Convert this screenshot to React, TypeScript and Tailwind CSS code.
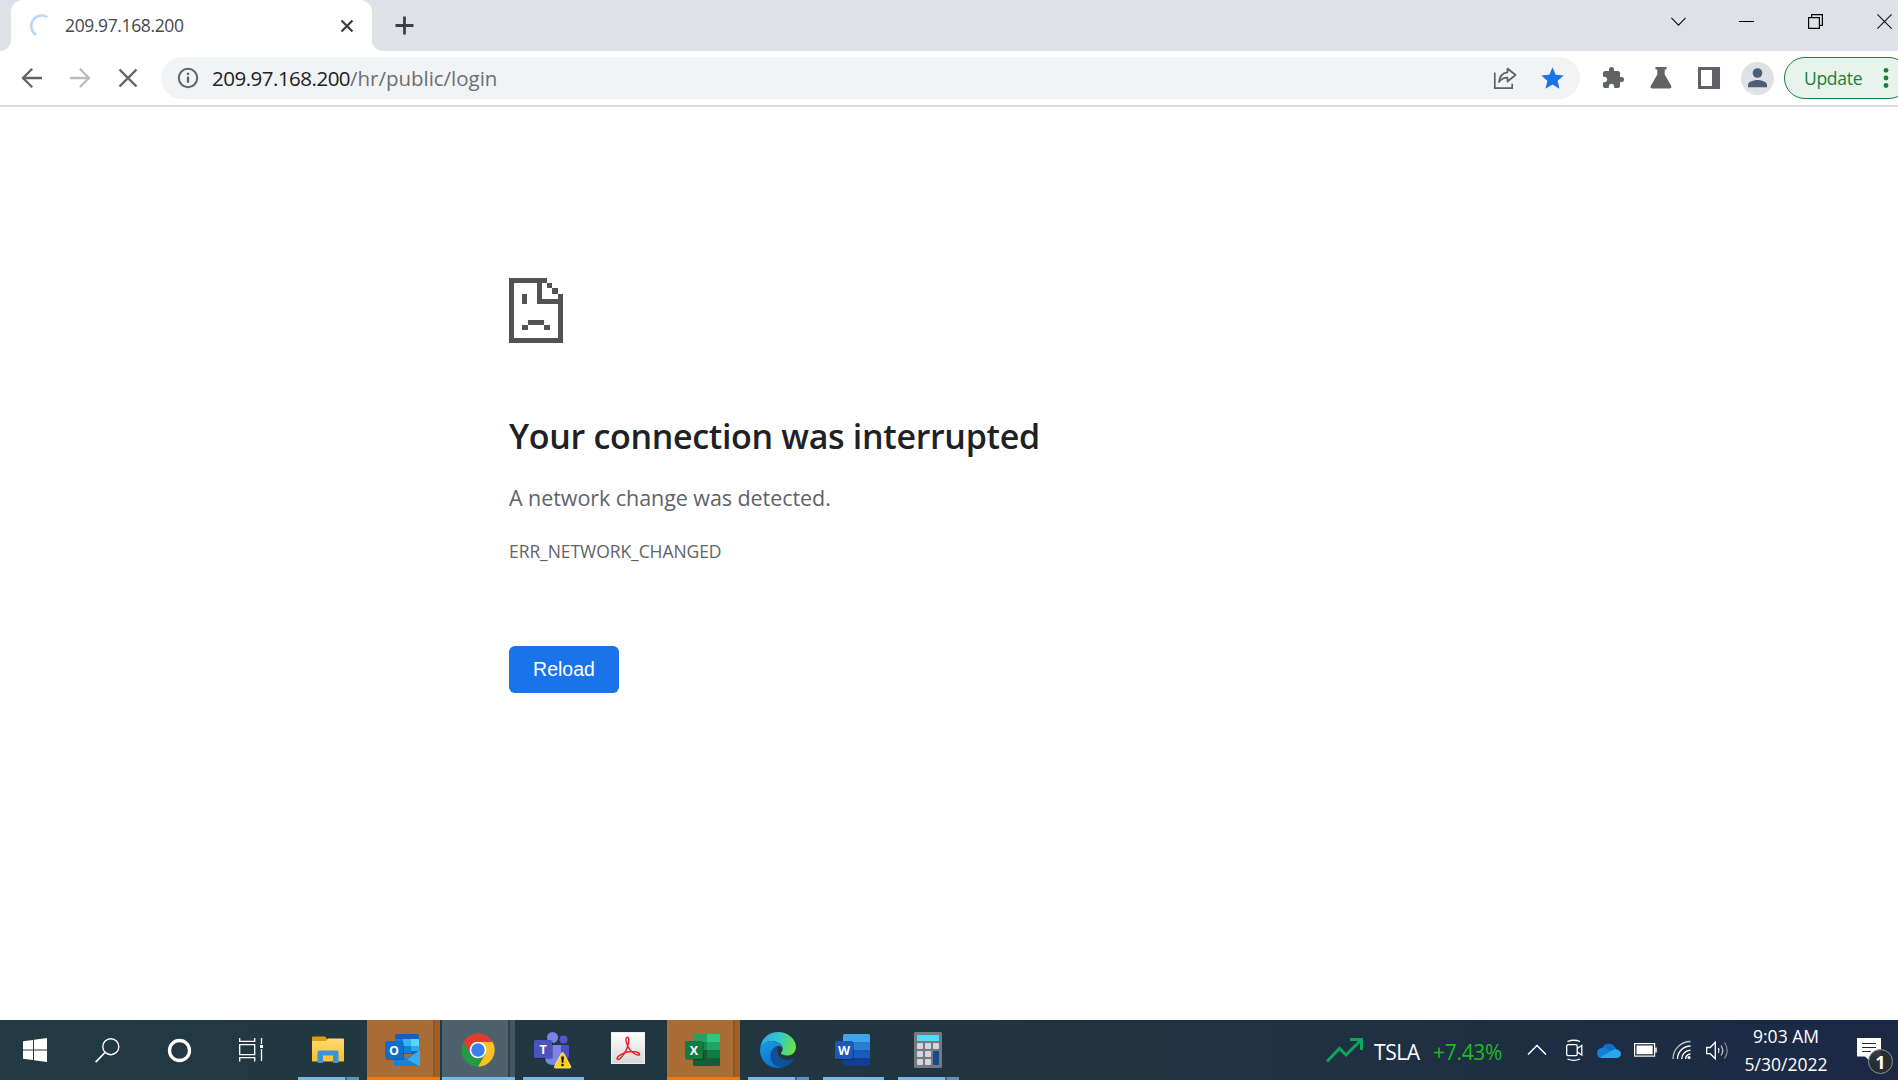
import type { ReactNode } from "react";
import { MdExtension, MdStar } from "react-icons/md";

function TabStrip() {
  return (
    <div className="flex h-[51px] shrink-0 bg-[#dee1e6]">
      <div className="flex w-[11px] items-end bg-white">
        <div className="h-full w-full rounded-br-[11px] bg-[#dee1e6]" />
      </div>
      <div className="flex w-[361px] items-center rounded-t-[12px] bg-white pl-[17px]">
        <svg width="24" height="26" viewBox="0 0 24 26" fill="none">
          <path d="M19.3 4.2A10 10 0 1 0 8 21.8" stroke="#bad6fb" strokeWidth="2.6" />
        </svg>
        <span className="-mt-[2px] ml-[13px] w-[260px] text-[17.5px] leading-[24px] tracking-[-0.38px] text-[#45494d]">
          209.97.168.200
        </span>
        <svg className="ml-[15px]" width="14" height="14" viewBox="0 0 14 14" fill="none">
          <path d="M1.5 1.5l11 11M12.5 1.5l-11 11" stroke="#3c4043" strokeWidth="2.3" />
        </svg>
      </div>
      <div className="flex w-[11px] bg-white">
        <div className="h-full w-full rounded-bl-[11px] bg-[#dee1e6]" />
      </div>
      <svg className="ml-[12px] mt-[16px]" width="19" height="19" viewBox="0 0 19 19" fill="none">
        <path d="M9.5 .5v18M.5 9.5h18" stroke="#3c4043" strokeWidth="2.8" />
      </svg>
      <div className="ml-auto flex pr-[6px] pt-[14px]">
        <svg width="15" height="15" viewBox="0 0 15 15" fill="none" stroke="#111" strokeWidth="1.1">
          <path d="M.4 3.8l7.1 7.4 7.1-7.4" />
        </svg>
        <svg className="ml-[53px]" width="15" height="15" viewBox="0 0 15 15" fill="none" stroke="#000">
          <path d="M0 7.5h15" />
        </svg>
        <svg className="ml-[54px]" width="15" height="15" viewBox="0 0 15 15" fill="none" stroke="#000" strokeWidth="1.2">
          <path d="M.6 3.6h10.8v10.8H.6zM3.6 3.6v-3h10.8v10.8h-3" />
        </svg>
        <svg className="ml-[54px]" width="15" height="15" viewBox="0 0 15 15" fill="none" stroke="#111" strokeWidth="1.1">
          <path d="M.4.4l14.2 14.2M14.6.4L.4 14.6" />
        </svg>
      </div>
    </div>
  );
}

function Toolbar() {
  return (
    <div className="flex h-[56px] w-[1898px] shrink-0 items-start overflow-hidden border-b-2 border-[#dadcde] bg-white pt-[6px]">
      <div className="flex h-[42px] w-[161px] shrink-0 items-center pl-[21px]">
        <svg width="22" height="22" viewBox="0 0 22 22" fill="none" stroke="#5f6368" strokeWidth="2.3">
          <path d="M21 11H2.5M11.2 1.8L2 11l9.2 9.2" />
        </svg>
        <svg className="ml-[26px]" width="22" height="22" viewBox="0 0 22 22" fill="none" stroke="#babcbe" strokeWidth="2.3">
          <path d="M1 11h18.5M10.8 1.8L20 11l-9.2 9.2" />
        </svg>
        <svg className="ml-[27px]" width="20" height="20" viewBox="0 0 20 20" fill="none" stroke="#5f6368" strokeWidth="2.4">
          <path d="M1.5 1.5l17 17M18.5 1.5l-17 17" />
        </svg>
      </div>
      <div className="flex h-[42px] w-[1419px] shrink-0 items-center rounded-full bg-[#f1f3f4] pl-[16px] pr-[14px]">
        <svg width="22" height="22" viewBox="0 0 22 22" fill="none">
          <circle cx="11" cy="11" r="9.2" stroke="#5f6368" strokeWidth="2" />
          <path d="M11 9.6v6.2M11 5.8v2.3" stroke="#5f6368" strokeWidth="2.3" />
        </svg>
        <div className="-mt-[1px] ml-[13px] flex text-[20.5px] leading-[28px]">
          <span className="tracking-[-0.5px] text-[#202124]">209.97.168.200</span>
          <span className="tracking-[-0.03px] text-[#6b6f74]">/hr/public/login</span>
        </div>
        <svg className="ml-auto" width="24" height="24" viewBox="0 0 24 24" fill="none" stroke="#5f6368" strokeWidth="1.7">
          <path d="M1.8 6.5v15.700h17.4v-4.5" />
          <path d="M14.5 2.500L22.5 9l-8 6.500v-3.800c-3.700 0-6.400 1.300-8.500 4.300.6-5.600 3.600-9 8.500-9.600z" strokeLinejoin="round" />
        </svg>
        <MdStar className="ml-[22px] text-[#1a73e8]" size={27} />
      </div>
      <div className="ml-[21px] flex h-[42px] shrink-0 items-center text-[#5f6368]">
        <MdExtension size={24} />
        <svg className="ml-[25px]" width="22" height="22" viewBox="0 0 22 22" fill="currentColor">
          <path d="M5.5 0h11v2.600h-1.800v5L21 18.500c1 1.800.2 3-1.500 3h-17c-1.700 0-2.500-1.200-1.500-3L7.300 7.600v-5H5.500z" />
        </svg>
        <svg className="ml-[26px]" width="22" height="22" viewBox="0 0 22 22">
          <path fill="currentColor" fillRule="evenodd" d="M0 0h22v22H0zM3 3v16h11V3z" />
        </svg>
        <div className="ml-[21px] flex h-[33px] w-[33px] items-center justify-center rounded-full bg-[#dee1e6]">
          <svg width="19" height="20" viewBox="0 0 19 20" fill="#4e5d78">
            <circle cx="9.5" cy="5" r="4.8" />
            <path d="M0 19.200v-2.400c0-3.200 6.300-4.800 9.500-4.800s9.500 1.600 9.500 4.800v2.400z" />
          </svg>
        </div>
        <div className="ml-[10px] flex h-[42px] w-[126px] shrink-0 items-center rounded-full border-[1.5px] border-[#188038] bg-[#e9f3ee] pl-[19px]">
          <span className="-mt-[1px] w-[60px] text-[17.5px] leading-[24px] tracking-[-0.3px] text-[#188038]">Update</span>
          <svg className="ml-[19px]" width="6" height="22" viewBox="0 0 6 22" fill="#188038">
            <circle cx="3" cy="3.300" r="2.400" />
            <circle cx="3" cy="11" r="2.400" />
            <circle cx="3" cy="18.500" r="2.400" />
          </svg>
        </div>
      </div>
    </div>
  );
}

function SadPage() {
  return (
    <svg width="54" height="65" viewBox="0 0 54 65" fill="#535353" shapeRendering="crispEdges">
      <path d="M0 0h38v5h-5v16h21v44H0zM5 5v55h44V26H28V5z" fillRule="evenodd" />
      <path d="M38 5h5v5h-5zM43 10h6v6h-6zM49 16h5v6h-5zM13 16h5v10h-5zM19 42h16v5H19zM13 47h6v5h-6zM35 47h6v5h-6z" />
    </svg>
  );
}

function ErrorPage() {
  return (
    <main className="flex-1 bg-white pl-[509px] pt-[171px]">
      <SadPage />
      <h1 className="mt-[68px] h-[50px] whitespace-nowrap text-[34px] font-semibold leading-[50px] tracking-[-0.32px] text-[#202124]">
        Your connection was interrupted
      </h1>
      <p className="mt-[21px] h-[32px] text-[21.5px] leading-[32px] tracking-[-0.06px] text-[#5f6368]">
        A network change was detected.
      </p>
      <p className="mt-[24px] h-[26px] text-[17.5px] leading-[26px] tracking-[-0.07px] text-[#5f6368]">
        ERR_NETWORK_CHANGED
      </p>
      <button className="mt-[82px] flex h-[47px] w-[110px] items-center justify-center rounded-[6px] bg-[#1a73e8] font-['Liberation_Sans',sans-serif] text-[19.5px] text-white">
        Reload
      </button>
    </main>
  );
}

function Indicator({ grouped }: { grouped?: boolean }) {
  return (
    <div className="absolute bottom-0 left-[7px] flex h-[3px] w-[61px]">
      <div className="flex-1 bg-[#76b9ed]" />
      {grouped && <div className="w-[2px] bg-[#41688a]" />}
      {grouped && <div className="w-[12px] bg-[#5f93bd]" />}
    </div>
  );
}

function Slot({ children, kind }: { children: ReactNode; kind?: "single" | "group" | "alert" | "active" }) {
  return (
    <div className="relative flex h-[60px] w-[75px] items-center justify-center pr-[2px]">
      {kind === "alert" && (
        <div className="absolute inset-x-[1px] inset-y-0 flex border-b-[3px] border-[#ff7300] bg-[#a96c34]">
          <div className="ml-auto w-[7px] border-l-2 border-[#915623] bg-[#9f5f27]" />
        </div>
      )}
      {kind === "active" && (
        <div className="absolute inset-x-[1px] inset-y-0 flex border-b-[3px] border-[#76b9ed] bg-[#4d626a]">
          <div className="ml-auto w-[7px] border-l-2 border-[#303f48] bg-[#445760]" />
        </div>
      )}
      {kind === "single" && <Indicator />}
      {kind === "group" && <Indicator grouped />}
      <div className="relative">{children}</div>
    </div>
  );
}

function OfficeBadge({ fill, letter }: { fill: string; letter: string }) {
  return (
    <>
      <rect x="1" y="9" width="18" height="18" rx="1.5" fill="#000" opacity=".25" />
      <rect x="0" y="8" width="18" height="18" rx="1.5" fill={fill} />
      <text x="9" y="21.5" textAnchor="middle" fontSize="12.5" fontWeight="700" fill="#fff" fontFamily="Open Sans, sans-serif">
        {letter}
      </text>
    </>
  );
}

function Taskbar() {
  return (
    <div className="flex h-[60px] w-[1898px] shrink-0 items-center bg-linear-to-r from-[#223a43] via-[#21353f] via-55% to-[#1b2945] text-white">
      <div className="flex w-[291px] shrink-0">
        <div className="flex w-[70px] justify-center">
          <svg width="24" height="24" viewBox="0 0 24 24" fill="#fff">
            <path d="M0 3.300l10-1.400v9.600H0zM11 1.700L24 0v11.500H11zM0 12.500h10v9.600L0 20.700zM11 12.500h13V24l-13-1.700z" />
          </svg>
        </div>
        <div className="flex w-[74px] justify-center">
          <svg width="25" height="25" viewBox="0 0 25 25" fill="none" stroke="#fff" strokeWidth="1.4">
            <circle cx="15.8" cy="8.7" r="8" />
            <path d="M10 14.500L.6 24.200" strokeWidth="1.7" />
          </svg>
        </div>
        <div className="flex w-[70px] justify-center">
          <svg width="25" height="25" viewBox="0 0 25 25" fill="none">
            <circle cx="12.5" cy="12.5" r="10" stroke="#fff" strokeWidth="3.3" />
          </svg>
        </div>
        <div className="flex w-[74px] justify-center">
          <svg width="25" height="24" viewBox="0 0 25 24" fill="none" stroke="#fff" strokeWidth="1.3">
            <path d="M.7 0v3.400h15V0M.7 6.700h15v10H.7zM.7 23.500v-3.800h15v3.800M22.500 0v6M22.500 11v12" />
            <rect x="21" y="7" width="3" height="3" fill="#fff" stroke="none" />
          </svg>
        </div>
      </div>
      <div className="flex shrink-0">
        <Slot kind="group">
          <svg width="32" height="28" viewBox="0 0 32 28">
            <defs>
              <linearGradient id="fold" x1="0" y1="0" x2="0" y2="1">
                <stop offset="0" stopColor="#ffdb73" />
                <stop offset="1" stopColor="#fbc02f" />
              </linearGradient>
            </defs>
            <path d="M0 1.500Q0 .5 1 .5h12l2.500 3H32V7H0z" fill="#e09e0c" />
            <path d="M0 5h14l2-2.500h15q1 0 1 1V25.500H0z" fill="url(#fold)" />
            <path d="M5.500 16.500q0-2 2-2h17q2 0 2 2V27H21v-7.500H11V27H5.500z" fill="#3a94dc" />
          </svg>
        </Slot>
        <Slot kind="alert">
          <svg width="36" height="34" viewBox="0 0 36 34">
            <rect x="10" y="1" width="24" height="20" rx="1.5" fill="#0f63bd" />
            <path d="M10 6h8v7h-8z" fill="#1481d6" />
            <path d="M18 6h8v7h-8z" fill="#35b4f2" />
            <path d="M26 6h8v7h-8z" fill="#57d8fc" />
            <path d="M10 13h8v7h-8z" fill="#0e5cab" />
            <path d="M18 13h8v7h-8z" fill="#1380d6" />
            <path d="M26 13h8v5h-8z" fill="#2ea8ea" />
            <path d="M9 19l13 6 13-8v15q0 1-1 1H10q-1 0-1-1z" fill="#1c8ee2" />
            <path d="M35 17v15q0 1-1 1H14z" fill="#35aef0" />
            <path d="M9 19v13q0 1 1 1h24z" fill="#1682dc" />
            <OfficeBadge fill="#0f6fce" letter="O" />
          </svg>
        </Slot>
        <Slot kind="active">
          <svg width="34" height="34" viewBox="0 0 48 48">
            <path d="M24 24L3.650 12.250A23.500 23.500 0 0 0 24 47.500L33.500 29z" fill="#249a48" />
            <path d="M24 12.250h20.350A23.500 23.500 0 0 1 24 47.500l10-17.500z" fill="#fcc31e" />
            <path d="M24 12.250h20.350A23.500 23.500 0 0 0 3.650 12.250l10.200 17.600z" fill="#e33b2e" />
            <circle cx="24" cy="24" r="11.8" fill="#fff" />
            <circle cx="24" cy="24" r="9.5" fill="#3b7ded" />
          </svg>
        </Slot>
        <Slot kind="single">
          <svg width="38" height="38" viewBox="0 0 38 38">
            <circle cx="29.5" cy="8.5" r="4" fill="#5059c9" />
            <path d="M22 14h13v9q0 7-7 7h-6z" fill="#4a52bd" />
            <circle cx="18.5" cy="6.5" r="5.5" fill="#7b83eb" />
            <path d="M11 14h16v12q0 8-8 8t-8-8z" fill="#7b83eb" />
            <rect x="1" y="10" width="18" height="18" rx="1.5" fill="#000" opacity=".25" />
            <rect x="0" y="9" width="18" height="18" rx="1.5" fill="#4b53bc" />
            <text x="9" y="22.5" textAnchor="middle" fontSize="12.5" fontWeight="700" fill="#fff" fontFamily="Open Sans, sans-serif">T</text>
            <path d="M28.500 21.500q.8 0 1.200.8l7 13q.6 1.700-1 1.700H21.500q-1.600 0-1-1.700l7-13q.3-.8 1-.8z" fill="#fcd116" stroke="#fff3b0" strokeWidth=".8" />
            <path d="M27.200 25.500h2.700l-.5 6.300h-1.700z" fill="#111" />
            <circle cx="28.55" cy="34" r="1.3" fill="#111" />
          </svg>
        </Slot>
        <Slot>
          <svg className="mb-[4px]" width="34" height="33" viewBox="0 0 34 33">
            <defs>
              <linearGradient id="pdf" x1="0" y1="0" x2="0" y2="1">
                <stop offset="0" stopColor="#fff" />
                <stop offset="1" stopColor="#d7d7d7" />
              </linearGradient>
            </defs>
            <rect x=".5" y=".5" width="33" height="31" fill="url(#pdf)" stroke="#eee" />
            <path d="M16 5.500c2.500-1.200 2 4.500.6 9-1.500 4.800-5.600 11.500-8.600 12.800-2.500.8-2.800-1.500.3-3.600 5-3.400 12-4.700 17-3.600 4.400 1 4 3.700.7 2.800-4.500-1.200-8.700-6.400-10.300-11.400-.9-3-.9-5.400.3-6z" fill="none" stroke="#e5252a" strokeWidth="1.5" />
          </svg>
        </Slot>
        <Slot kind="alert">
          <svg width="36" height="34" viewBox="0 0 36 34">
            <path d="M8 2.500Q8 1 9.500 1H22v8H8z" fill="#21a366" />
            <path d="M22 1h11.500Q35 1 35 2.500V9H22z" fill="#33c481" />
            <path d="M8 9h14v8H8z" fill="#168a4a" />
            <path d="M22 9h13v8H22z" fill="#21a366" />
            <path d="M8 17h14v8H8z" fill="#185c37" />
            <path d="M22 17h13v8H22z" fill="#107c41" />
            <path d="M8 25h27v6.500q0 1.500-1.500 1.500h-24Q8 33 8 31.500z" fill="#185c37" />
            <OfficeBadge fill="#107c41" letter="X" />
          </svg>
        </Slot>
        <Slot kind="group">
          <svg width="36" height="36" viewBox="0 0 36 36">
            <defs>
              <linearGradient id="crest" x1="0" y1=".3" x2="1" y2=".5">
                <stop offset="0" stopColor="#2aa9e0" />
                <stop offset=".5" stopColor="#35c6d0" />
                <stop offset="1" stopColor="#6be53f" />
              </linearGradient>
              <linearGradient id="wave" x1="0" y1="0" x2=".4" y2="1">
                <stop offset="0" stopColor="#1d9be3" />
                <stop offset="1" stopColor="#0a72d0" />
              </linearGradient>
            </defs>
            <path d="M.2 16C1.500 6 9 0 18 0c10.500 0 18 7.500 18 15 0 5-4 8.500-8.500 8.500-4.500 0-7.500-1-6.300-3C24.500 16.500 22 12 17 10 11 8 3.500 9 .2 16z" fill="url(#crest)" />
            <path d="M0 18C.5 12 6 8.500 12 9c6 .5 9.500 4 10 6.500-3-2.500-7.500-2-8.500 3-1 7 4 13.500 12.500 15.500-3 1.500-5.500 2-8 2C7.500 36 0 28 0 18z" fill="url(#wave)" />
            <path d="M18 14.300c-5 .8-8.500 5.500-7.500 11.200C11.500 32 18 37 24.500 35c4-1.500 6.800-4.300 8.700-7.300.4-.8-.3-1-1-.7-7 3-15-1-14.800-8 0-2 .3-3.500.6-4.700z" fill="#124f9a" />
          </svg>
        </Slot>
        <Slot kind="single">
          <svg width="36" height="34" viewBox="0 0 36 34">
            <path d="M8 2.500Q8 1 9.500 1h24Q35 1 35 2.500V9H8z" fill="#41a5ee" />
            <path d="M8 9h27v8H8z" fill="#2b7cd3" />
            <path d="M8 17h27v8H8z" fill="#185abd" />
            <path d="M8 25h27v6.500q0 1.500-1.500 1.500h-24Q8 33 8 31.500z" fill="#103f91" />
            <OfficeBadge fill="#1b56b8" letter="W" />
          </svg>
        </Slot>
        <Slot kind="group">
          <svg width="28" height="36" viewBox="0 0 28 36">
            <rect width="28" height="36" rx="1.5" fill="#76797f" />
            <rect x="3" y="3" width="22" height="6" rx=".5" fill="#4fdcfb" />
            <g fill="#d3d6dc">
              <rect x="3" y="11" width="6" height="6" rx="1" />
              <rect x="11" y="11" width="6" height="6" rx="1" />
              <rect x="19" y="11" width="6" height="6" rx="1" />
              <rect x="3" y="19" width="6" height="6" rx="1" />
              <rect x="11" y="19" width="6" height="6" rx="1" />
              <rect x="3" y="27" width="6" height="6" rx="1" />
              <rect x="11" y="27" width="6" height="6" rx="1" />
            </g>
            <rect x="19" y="19" width="6" height="14" rx="1" fill="#164a8c" />
          </svg>
        </Slot>
      </div>
      <Tray />
    </div>
  );
}

function Tray() {
  return (
    <div className="ml-auto flex h-[60px] w-[572px] shrink-0 items-center">
      <svg width="37" height="25" viewBox="0 0 37 25" fill="none" stroke="#0ca75a" strokeWidth="3">
        <path d="M1 23.500L13.500 10.500l6.500 6.500L34 3M24 1.500h11.500V12" />
      </svg>
      <span className="ml-[11px] mt-[4px] w-[47px] text-[21px] leading-[28px] tracking-[-0.4px]">TSLA</span>
      <span className="ml-[12px] mt-[4px] w-[70px] text-[21px] leading-[28px] tracking-[-0.3px] text-[#1fb922]">+7.43%</span>
      <svg className="ml-[24px]" width="20" height="12" viewBox="0 0 20 12" fill="none" stroke="#fff" strokeWidth="1.5">
        <path d="M1 10.500L10 1.500l9 9" />
      </svg>
      <svg className="ml-[19px]" width="17" height="23" viewBox="0 0 17 23" fill="none" stroke="#fff" strokeWidth="1.3">
        <rect x=".7" y="5.7" width="10.5" height="11" rx="1.5" />
        <path d="M11.200 9.500l4.600-3v9.500l-4.600-3M1.500 2.500Q8 0 14 2.500M1.500 20Q8 22.800 14 20" />
      </svg>
      <svg className="ml-[14px]" width="24" height="16" viewBox="0 0 24 16">
        <path d="M5 7a7 6.500 0 0 1 13-2l2 3-12 4z" fill="#0f6fc9" />
        <path d="M0 11a5 5 0 0 1 6-5q3 0 6 2.500l6 3-14 4.500Q0 15.500 0 11z" fill="#1280d8" />
        <path d="M3 15.500L15 8.500q2-2 5-1 4 1.300 4 4.500t-4 4H5z" fill="#28a8ea" />
      </svg>
      <svg className="ml-[13px]" width="23" height="14" viewBox="0 0 23 14" fill="none">
        <rect x=".6" y=".6" width="20" height="12.5" stroke="#fff" strokeWidth="1.2" />
        <rect x="2.5" y="2.5" width="16.2" height="8.7" fill="#fff" />
        <path d="M22 4.500v5" stroke="#fff" strokeWidth="1.5" />
      </svg>
      <svg className="ml-[15px]" width="20" height="20" viewBox="0 0 20 20" fill="none" stroke="#fff" strokeWidth="1.3">
        <path d="M1 19A17.500 17.500 0 0 1 18.500 1.500" opacity=".75" />
        <path d="M5.500 19A13 13 0 0 1 18.500 6" />
        <path d="M9.700 19A9 9 0 0 1 18.500 10.200" />
        <path d="M13.500 19a5 5 0 0 1 5-5" />
        <circle cx="17" cy="17.5" r="1.6" fill="#fff" stroke="none" />
      </svg>
      <svg className="ml-[14px]" width="23" height="19" viewBox="0 0 23 19" fill="none" stroke="#fff" strokeWidth="1.3">
        <path d="M.7 6.500h3.500L9.300 1.200v16.600L4.200 12.700H.7z" />
        <path d="M12.300 7.200q1.500 2.400 0 4.800" />
        <path d="M15 4.500q3.500 5 0 10" opacity=".7" />
        <path d="M18.500 1.500q5.500 8 0 16" opacity=".45" />
      </svg>
      <div className="ml-[15px] flex w-[84px] flex-col items-center whitespace-nowrap text-[17.5px] leading-[28px]">
        <span>9:03 AM</span>
        <span>5/30/2022</span>
      </div>
      <div className="relative ml-[29px] h-[24px] w-[24px]">
        <svg width="24" height="24" viewBox="0 0 24 24">
          <path d="M0 0h24v18.500H13.500v5L8 18.500H0z" fill="#fff" />
          <path d="M5 5.500h14M5 9.500h14M5 13.500h9" stroke="#1b2945" strokeWidth="1.2" />
        </svg>
        <div className="absolute left-[11px] top-[11px] flex h-[25px] w-[25px] items-center justify-center rounded-full border border-[#8e9094] bg-[#2b2d33]/95 text-[18px] font-bold leading-none">
          1
        </div>
      </div>
    </div>
  );
}

export default function App() {
  return (
    <div className="flex h-[1080px] w-[1898px] flex-col overflow-hidden bg-white font-['Open_Sans',sans-serif]">
      <TabStrip />
      <Toolbar />
      <ErrorPage />
      <Taskbar />
    </div>
  );
}
